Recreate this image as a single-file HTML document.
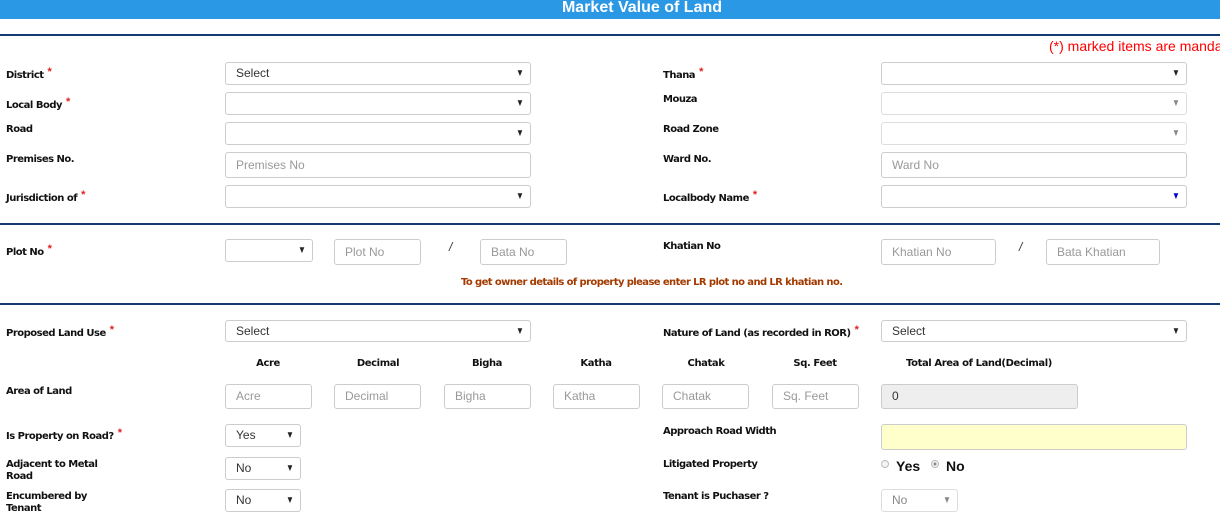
<!DOCTYPE html>
<html><head><meta charset="utf-8"><style>
*{box-sizing:border-box;margin:0;padding:0}
body{width:1220px;height:506px;overflow:hidden;background:#fff;position:relative;font-family:"Liberation Sans",sans-serif}
.a{position:absolute}
.hd{left:0;top:0;width:1220px;height:19px;background:#2b98e6;color:#fff;font-weight:bold;font-size:16px;text-align:center;line-height:15px;padding-left:64px}
.ln{left:0;width:1220px;height:2px;background:#143a72}
.lb{font-family:"DejaVu Sans",sans-serif;font-weight:bold;font-size:10px;color:#111;line-height:12px;letter-spacing:-0.5px;margin-top:2px}
.st{color:#e02020;font-size:11px;position:relative;top:-3px;margin-left:4px;font-family:"Liberation Sans",sans-serif}
.bx{border:1px solid #ccc;border-radius:3px;background:#fff;font-size:12px;color:#333;padding-left:10px;line-height:21px}
.ph{color:#999}
.ar{position:absolute;right:5px;top:0;font-size:10px;color:#222;transform:scaleX(0.8)}
.th{font-family:"DejaVu Sans",sans-serif;font-weight:bold;font-size:10px;color:#111;text-align:center;width:100px;letter-spacing:-0.4px;margin-top:1px}
</style></head><body>
<div class="a hd">Market Value of Land</div>
<div class="a ln" style="top:34px"></div>
<div class="a" style="left:1049px;top:38px;font-size:14px;color:#f00;white-space:nowrap">(*) marked items are mandatory</div>

<div class="a lb" style="left:6px;top:67px">District<span class="st">*</span></div>
<div class="a bx" style="left:225px;top:62px;width:306px;height:23px">Select<span class="ar">▼</span></div>
<div class="a lb" style="left:6px;top:97px">Local Body<span class="st">*</span></div>
<div class="a bx" style="left:225px;top:92px;width:306px;height:23px"><span class="ar">▼</span></div>
<div class="a lb" style="left:6px;top:122px">Road</div>
<div class="a bx" style="left:225px;top:122px;width:306px;height:23px"><span class="ar">▼</span></div>
<div class="a lb" style="left:6px;top:152px">Premises No.</div>
<div class="a bx ph" style="left:225px;top:152px;width:306px;height:26px;line-height:24px">Premises No</div>
<div class="a lb" style="left:6px;top:190px">Jurisdiction of<span class="st">*</span></div>
<div class="a bx" style="left:225px;top:185px;width:306px;height:23px"><span class="ar">▼</span></div>

<div class="a lb" style="left:663px;top:67px">Thana<span class="st">*</span></div>
<div class="a bx" style="left:881px;top:62px;width:306px;height:23px"><span class="ar">▼</span></div>
<div class="a lb" style="left:663px;top:92px">Mouza</div>
<div class="a bx" style="left:881px;top:92px;width:306px;height:23px;border-color:#ddd"><span class="ar" style="color:#888">▼</span></div>
<div class="a lb" style="left:663px;top:122px">Road Zone</div>
<div class="a bx" style="left:881px;top:122px;width:306px;height:23px;border-color:#ddd"><span class="ar" style="color:#888">▼</span></div>
<div class="a lb" style="left:663px;top:152px">Ward No.</div>
<div class="a bx ph" style="left:881px;top:152px;width:306px;height:26px;line-height:24px">Ward No</div>
<div class="a lb" style="left:663px;top:190px">Localbody Name<span class="st">*</span></div>
<div class="a bx" style="left:881px;top:185px;width:306px;height:23px"><span class="ar" style="color:#00c">▼</span></div>

<div class="a ln" style="top:223px"></div>
<div class="a lb" style="left:6px;top:244px">Plot No<span class="st">*</span></div>
<div class="a bx" style="left:225px;top:239px;width:88px;height:23px"><span class="ar">▼</span></div>
<div class="a bx ph" style="left:334px;top:239px;width:87px;height:26px;line-height:24px">Plot No</div>
<div class="a" style="left:449px;top:240px;font-size:12px;color:#333;font-style:italic">/</div>
<div class="a bx ph" style="left:480px;top:239px;width:87px;height:26px;line-height:24px">Bata No</div>
<div class="a lb" style="left:663px;top:239px">Khatian No</div>
<div class="a bx ph" style="left:881px;top:239px;width:115px;height:26px;line-height:24px">Khatian No</div>
<div class="a" style="left:1019px;top:240px;font-size:12px;color:#333;font-style:italic">/</div>
<div class="a bx ph" style="left:1046px;top:239px;width:114px;height:26px;line-height:24px">Bata Khatian</div>
<div class="a lb" style="left:461px;top:275px;color:#a33a00;letter-spacing:-0.6px">To get owner details of property please enter LR plot no and LR khatian no.</div>

<div class="a ln" style="top:303px"></div>
<div class="a lb" style="left:6px;top:325px">Proposed Land Use<span class="st">*</span></div>
<div class="a bx" style="left:225px;top:320px;width:306px;height:22px">Select<span class="ar">▼</span></div>
<div class="a lb" style="left:663px;top:325px">Nature of Land (as recorded in ROR)<span class="st">*</span></div>
<div class="a bx" style="left:881px;top:320px;width:306px;height:22px">Select<span class="ar">▼</span></div>

<div class="a th" style="left:218px;top:357px">Acre</div>
<div class="a th" style="left:328px;top:357px">Decimal</div>
<div class="a th" style="left:437px;top:357px">Bigha</div>
<div class="a th" style="left:546px;top:357px">Katha</div>
<div class="a th" style="left:656px;top:357px">Chatak</div>
<div class="a th" style="left:765px;top:357px">Sq. Feet</div>
<div class="a th" style="left:879px;top:357px;width:200px">Total Area of Land(Decimal)</div>

<div class="a lb" style="left:6px;top:384px">Area of Land</div>
<div class="a bx ph" style="left:225px;top:384px;width:87px;height:25px;line-height:23px">Acre</div>
<div class="a bx ph" style="left:334px;top:384px;width:87px;height:25px;line-height:23px">Decimal</div>
<div class="a bx ph" style="left:444px;top:384px;width:87px;height:25px;line-height:23px">Bigha</div>
<div class="a bx ph" style="left:553px;top:384px;width:87px;height:25px;line-height:23px">Katha</div>
<div class="a bx ph" style="left:662px;top:384px;width:87px;height:25px;line-height:23px">Chatak</div>
<div class="a bx ph" style="left:772px;top:384px;width:87px;height:25px;line-height:23px">Sq. Feet</div>
<div class="a bx" style="left:881px;top:384px;width:197px;height:25px;line-height:23px;background:#eee">0</div>

<div class="a lb" style="left:6px;top:428px">Is Property on Road?<span class="st">*</span></div>
<div class="a bx" style="left:225px;top:424px;width:76px;height:23px">Yes<span class="ar">▼</span></div>
<div class="a lb" style="left:663px;top:424px">Approach Road Width</div>
<div class="a bx" style="left:881px;top:424px;width:306px;height:26px;background:#ffffcc"></div>

<div class="a lb" style="left:6px;top:457px">Adjacent to Metal<br>Road</div>
<div class="a bx" style="left:225px;top:457px;width:76px;height:23px">No<span class="ar">▼</span></div>
<div class="a lb" style="left:663px;top:457px">Litigated Property</div>
<div class="a" style="left:881px;top:460px;width:8px;height:8px;border:1px solid #bbb;border-radius:50%;background:#f4f4f4"></div>
<div class="a" style="left:896px;top:458px;font-size:14px;font-weight:bold;color:#111">Yes</div>
<div class="a" style="left:931px;top:460px;width:8px;height:8px;border:1px solid #bbb;border-radius:50%;background:radial-gradient(#888 30%,#f4f4f4 40%)"></div>
<div class="a" style="left:946px;top:458px;font-size:14px;font-weight:bold;color:#111">No</div>

<div class="a lb" style="left:6px;top:489px">Encumbered by<br>Tenant</div>
<div class="a bx" style="left:225px;top:489px;width:76px;height:23px">No<span class="ar">▼</span></div>
<div class="a lb" style="left:663px;top:489px">Tenant is Puchaser ?</div>
<div class="a bx" style="left:881px;top:489px;width:77px;height:23px;color:#888;border-color:#ddd">No<span class="ar" style="color:#888">▼</span></div>
</body></html>
